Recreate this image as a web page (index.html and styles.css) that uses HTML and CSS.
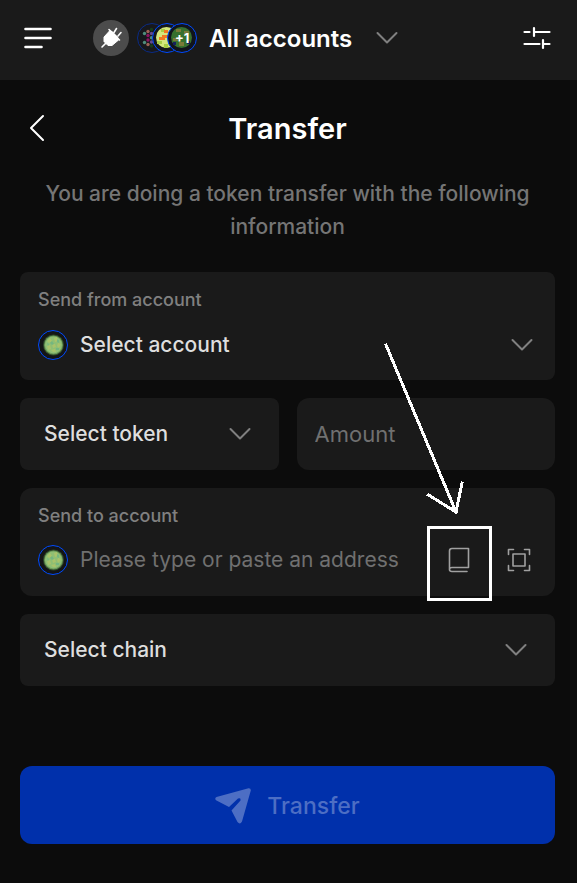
FILE: index.html
```html
<!DOCTYPE html>
<html lang="en">
<head>
<meta charset="utf-8">
<meta name="viewport" content="width=device-width, initial-scale=1">
<title>Transfer</title>
<link rel="stylesheet" href="styles.css">
</head>
<body>
<svg class="sprite" aria-hidden="true">
  <symbol id="chevron-down" viewBox="0 0 22 14">
    <path d="M1.500 2 11 11.500 20.500 2" fill="none" stroke="currentColor" stroke-width="2" stroke-linecap="round" stroke-linejoin="round"/>
  </symbol>
  <symbol id="avatar" viewBox="0 0 30 30">
    <circle cx="15" cy="15" r="14.500" fill="#141516" stroke="#004bff"/>
    <circle cx="15.500" cy="15" r="10.500" fill="#2f4a2b"/>
    <circle cx="15.500" cy="15" r="9.500" fill="#6c9a58"/>
    <circle cx="15.500" cy="15" r="8.500" fill="#8fbf74"/>
    <path d="M9 11l3-3 2 3-3 2zM16 8l3-1 1 4-3 1zM20 13l3 1-2 4-2-2zM9 16l3-1 1 4-3 1zM14 14l3 0 1 3-3 1zM13 20l4-1 1 3-3 0z" fill="#a9c36b"/>
    <path d="M12 13l2-2 2 3-2 1zM18 18l3 0 0 2-3 0zM19 9l2 1 0 3-2-1zM9 13l2 1-1 2z" fill="#74b680"/>
  </symbol>
</svg>

<header class="topbar">
  <button class="icon-button" type="button" aria-label="Menu">
    <svg width="28" height="22" viewBox="0 0 28 22"><path d="M1.500 2h25M1.500 11h25M1.500 20h16" stroke="#fff" stroke-width="2.600" stroke-linecap="round"/></svg>
  </button>
  <button class="icon-button connection" type="button" aria-label="Connection">
    <svg width="36" height="36" viewBox="0 0 36 36">
      <circle cx="18" cy="18" r="18" fill="#4c4c4c"/>
      <path d="M11 17 16.500 11 25.500 20 19 25.500H15L11 21.500Z" fill="#fff" stroke="#fff" stroke-width="1" stroke-linejoin="round"/>
      <path d="M16 10 19 11 25 17 26 20 21 22Z" fill="#fff"/>
      <path d="M9 27l5-5M16 9.500 26.500 20M21 12.500l2.500-4M25 16l3-3.500" stroke="#fff" stroke-width="1.600" stroke-linecap="round"/>
    </svg>
  </button>
  <button class="account-switch" type="button">
    <svg width="60" height="30" viewBox="0 0 60 30" aria-hidden="true">
      <circle cx="15" cy="15" r="14.500" fill="#17181c" stroke="#0b2c86"/>
      <g fill="#9c6255"><circle cx="11" cy="8.500" r="1.700"/><circle cx="11" cy="21.500" r="1.700"/></g>
      <g fill="#4f8c7c"><circle cx="7.500" cy="10.500" r="1.700"/><circle cx="7.500" cy="19.500" r="1.700"/></g>
      <g fill="#8e1460"><circle cx="11" cy="12.500" r="1.700"/><circle cx="11" cy="17" r="1.700"/></g>
      <g fill="#634a8c"><circle cx="14.500" cy="10.500" r="1.700"/><circle cx="14.500" cy="19" r="1.700"/></g>
      <g fill="#173d17"><circle cx="14.500" cy="6.500" r="1.700"/><circle cx="14.500" cy="23" r="1.700"/></g>
      <circle cx="14.500" cy="14.800" r="1.700" fill="#4f8c7c"/>
      <circle cx="30" cy="15" r="14.500" fill="#15171c" stroke="#004bff"/>
      <circle cx="29.500" cy="14.500" r="10.500" fill="#d3e77d"/>
      <path d="M24 6h4v3h-4zM20 18h5v3h-5zM27 21h4v4h-4z" fill="#a7cd45"/>
      <path d="M27 7h4v3h-4zM25 12h7v3h-4v2h-6v-3h3z" fill="#f07a22"/>
      <circle cx="45" cy="15" r="14.500" fill="#11141c" stroke="#004bff"/>
      <circle cx="44.500" cy="14.500" r="10.500" fill="#37702e"/>
      <path d="M39 6h5v3h-5zM47 8h5v3h-5zM36 15h5v3h-5zM42 19h5v4h-5z" fill="#7a7a38"/>
      <path d="M36 19h3v3h-3zM50 18h3v3h-3z" fill="#17205e"/>
      <text x="38" y="20" class="avatar-count">+1</text>
    </svg>
    <span class="account-name">All accounts</span>
    <svg class="chevron"><use href="#chevron-down"/></svg>
  </button>
  <button class="icon-button" type="button" aria-label="Customize">
    <svg width="28" height="24" viewBox="0 0 28 24"><path d="M1.500 6h5M11 6h15.500M11 2v8M1.500 18h15M20 14v8M20 18h6.500" stroke="#fff" stroke-width="2.200" stroke-linecap="round"/></svg>
  </button>
</header>

<main class="page">
  <div class="title-row">
    <button class="icon-button back" type="button" aria-label="Back">
      <svg width="16" height="28" viewBox="0 0 16 28"><path d="M14 2 2 14 14 26" fill="none" stroke="#fff" stroke-width="2" stroke-linecap="round" stroke-linejoin="round"/></svg>
    </button>
    <h1>Transfer</h1>
  </div>
  <p class="intro">You are doing a token transfer with the following information</p>

  <form class="form">
    <div class="card">
      <label class="caption" for="from">Send from account</label>
      <div class="row">
        <svg class="avatar"><use href="#avatar"/></svg>
        <div class="picker">
          <select id="from"><option>Select account</option></select>
          <svg class="chevron"><use href="#chevron-down"/></svg>
        </div>
      </div>
    </div>

    <div class="pair">
      <div class="picker boxed">
        <select aria-label="Token"><option>Select token</option></select>
        <svg class="chevron"><use href="#chevron-down"/></svg>
      </div>
      <input class="amount" type="text" inputmode="decimal" aria-label="Amount" placeholder="Amount">
    </div>

    <div class="card recipient">
      <label class="caption" for="to">Send to account</label>
      <div class="row">
        <svg class="avatar"><use href="#avatar"/></svg>
        <input class="address" id="to" type="text" placeholder="Please type or paste an address">
        <div class="actions">
          <button class="icon-button tool" type="button" aria-label="Address book">
            <svg width="22" height="26" viewBox="0 0 22 26"><path d="M1.500 23V4Q1.500 1.500 4 1.500H20.500V20.500H4Q1.500 20.500 1.500 22.500Q1.500 24.500 4 24.500H19" fill="none" stroke="#a0a0a0" stroke-width="1.600" stroke-linecap="round" stroke-linejoin="round"/></svg>
            <svg class="callout" viewBox="0 0 120 265" aria-hidden="true"><path d="M6 5 76 172M48.500 155 76 172 82 143" stroke-linecap="square"/><rect x="48.500" y="187.500" width="62" height="72"/></svg>
          </button>
          <button class="icon-button tool" type="button" aria-label="Scan QR code">
            <svg width="24" height="24" viewBox="0 0 24 24"><path d="M1.500 6.500v-5h5M17.500 1.500h5v5M22.500 17.500v5h-5M6.500 22.500h-5v-5M6 6h12v12H6z" fill="none" stroke="#a0a0a0" stroke-width="1.600" stroke-linecap="round" stroke-linejoin="round"/></svg>
          </button>
        </div>
      </div>
    </div>

    <div class="picker boxed">
      <select aria-label="Chain"><option>Select chain</option></select>
      <svg class="chevron"><use href="#chevron-down"/></svg>
    </div>

    <button class="submit" type="submit" disabled>
      <svg width="36" height="36" viewBox="0 0 36 36" aria-hidden="true"><path d="M1.500 9 33.500.2Q36 0 35.800 2.500L27 33.500Q25 37 22.500 34L16.500 22.500 25.500 12.500Q26 9.500 23 10.500L14 19 1.500 12.500Q-1 10.500 1.500 9Z" fill="currentColor"/></svg>
      Transfer
    </button>
  </form>
</main>
</body>
</html>
```

FILE: styles.css
```css
* {
  box-sizing: border-box;
}

body {
  margin: 0;
  min-height: 100vh;
  background: #0c0c0c;
  color: #fff;
  font: 500 21px/32px Inter, "Liberation Sans", sans-serif;
}

svg {
  display: block;
  flex: none;
}

button,
input,
select {
  margin: 0;
  padding: 0;
  border: 0;
  background: none;
  color: inherit;
  font: inherit;
}

.sprite {
  position: absolute;
  width: 0;
  height: 0;
}

.icon-button {
  display: flex;
  align-items: center;
  justify-content: center;
}

.chevron {
  width: 22px;
  height: 14px;
  color: #808080;
}

.avatar {
  width: 30px;
  height: 30px;
}

/* Top bar */
.topbar {
  display: flex;
  align-items: center;
  height: 80px;
  padding: 0 26px 4px 24px;
  background: #1a1a1a;
}

.connection {
  margin: 0 8px 0 41px;
}

.account-switch {
  display: flex;
  align-items: center;
  gap: 12px;
  margin-right: auto;
  font-weight: 600;
  font-size: 24px;
}

.account-name {
  padding-top: 2px;
}

.account-switch .chevron {
  margin-left: 12px;
}

.avatar-count {
  fill: #fff;
  font: 700 13px Inter, sans-serif;
}

/* Page */
.page {
  padding: 27px 22px 0 20px;
}

.title-row {
  display: grid;
  grid-template-columns: 34px 1fr 34px;
  align-items: center;
}

.back {
  height: 40px;
}

h1 {
  margin: 0;
  padding-top: 2px;
  font-weight: 600;
  font-size: 29px;
  line-height: 40px;
  text-align: center;
}

.intro {
  margin: 28px 24px 29px;
  color: #757575;
  line-height: 33px;
  text-align: center;
}

.form {
  display: grid;
  gap: 18px;
}

.card,
.boxed,
.amount {
  border-radius: 8px;
  background: #1a1a1a;
}

.card {
  padding: 14px 18px 20px;
}

.recipient,
.amount {
  border-radius: 12px;
}

.caption {
  display: block;
  margin-bottom: 17px;
  color: #808080;
  font-size: 18px;
  line-height: 27px;
}

.recipient {
  padding-bottom: 21px;
}

.recipient .caption {
  margin-bottom: 16px;
}

.row {
  display: flex;
  align-items: center;
  gap: 12px;
  height: 30px;
}

.pair {
  display: grid;
  grid-template-columns: 1fr 1fr;
  gap: 18px;
}

/* The chevron shares the select's grid cell and sits at its right end. */
.picker {
  display: grid;
  flex: 1;
  align-items: center;
  color: #dedede;
}

.picker > * {
  grid-area: 1 / 1;
}

.picker select {
  width: 100%;
  height: 32px;
  appearance: none;
}

.picker .chevron {
  justify-self: end;
  margin-right: 4px;
  pointer-events: none;
}

.boxed select {
  height: 72px;
  padding: 0 54px 0 24px;
}

.boxed .chevron {
  margin-right: 28px;
}

.amount {
  width: 100%;
  height: 72px;
  padding: 0 18px;
  font-size: 22px;
}

.amount,
.address {
  font-weight: 400;
}

::placeholder {
  color: #707070;
  opacity: 1;
}

.address {
  flex: 1;
  min-width: 0;
  height: 32px;
}

.actions {
  display: flex;
  gap: 20px;
  margin-right: -2px;
}

.tool {
  position: relative;
  width: 40px;
  height: 40px;
}

.callout {
  position: absolute;
  top: -200px;
  left: -59px;
  width: 120px;
  height: 265px;
  fill: none;
  stroke: #fff;
  stroke-width: 3px;
  shape-rendering: crispEdges;
  pointer-events: none;
}

.submit {
  display: flex;
  align-items: center;
  justify-content: center;
  gap: 16px;
  height: 78px;
  margin-top: 62px;
  padding-top: 2px;
  border-radius: 12px;
  background: #0030ab;
  color: #4d6ec4;
  font-size: 23px;
}
```
